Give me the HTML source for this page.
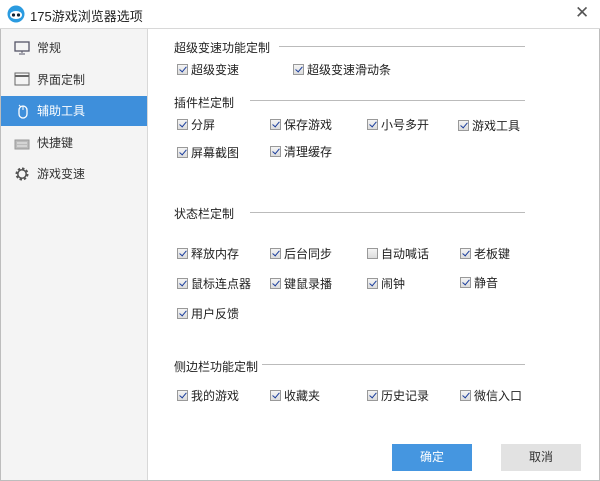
<!DOCTYPE html>
<html><head><meta charset="utf-8"><style>
*{margin:0;padding:0;box-sizing:border-box}
body{width:600px;height:481px;overflow:hidden;background:#fff;font-family:"Liberation Sans","Noto Sans CJK SC",sans-serif;font-size:12px;color:#222;position:relative}
.abs{position:absolute}
.frame{left:0;top:0;width:600px;height:481px;border:1px solid #bdbdbd}
.title{left:0;top:0;width:600px;height:29px;border-bottom:1px solid #d8d8d8;background:#fff}
.side{left:1px;top:29px;width:147px;height:451px;background:#f4f4f4;border-right:1px solid #d8d8d8}
.item{left:1px;width:146px;height:30px;line-height:30px;padding-left:36px;font-size:12px;color:#333}
.sel{background:#3e8fdb;color:#fff}
.h{font-size:12px;color:#222}
.line{height:1px;background:#bbb}
.cb{font-size:12px;color:#222;white-space:nowrap;line-height:14px}
.cb i{display:inline-block;width:11px;height:11px;border:1px solid #999;background:linear-gradient(#f4f4f4,#dcdcdc);vertical-align:-1px;margin-right:3px;position:relative}
.cb i.c:after{content:"";position:absolute;left:3px;top:0px;width:3px;height:6px;border:solid #1a3d9c;border-width:0 1.5px 1.5px 0;transform:rotate(40deg)}
.btn{width:80px;height:27px;line-height:27px;text-align:center;font-size:12px}
</style></head><body>
<div class="abs frame"></div>
<div class="abs title">
<svg class="abs" style="left:7px;top:5px" width="18" height="18" viewBox="0 0 18 18"><circle cx="9" cy="9" r="8.5" fill="#2b9be0"/><ellipse cx="9" cy="10" rx="6" ry="4" fill="#fff"/><circle cx="6.5" cy="10" r="1.6" fill="#123"/><circle cx="11.5" cy="10" r="1.6" fill="#123"/></svg>
<div class="abs" style="left:30px;top:6px;font-size:13px;color:#222">175游戏浏览器选项</div>
<div class="abs" style="left:575px;top:3px;font-size:17px;color:#555">✕</div>
</div>
<div class="abs side"></div>
<svg class="abs" style="left:14px;top:41px" width="16" height="14"><rect x="1" y="1" width="14" height="9" fill="none" stroke="#556" stroke-width="1.3"/><path d="M8 10v2M5 13h6" stroke="#556"/></svg>
<div class="abs item" style="top:33px">常规</div>
<svg class="abs" style="left:14px;top:72px" width="16" height="14"><rect x="1" y="1" width="14" height="12" fill="none" stroke="#666"/><path d="M1 4h14" stroke="#666" stroke-width="2"/></svg>
<div class="abs item" style="top:65px">界面定制</div>
<div class="abs item sel" style="top:96px">辅助工具</div>
<svg class="abs" style="left:15px;top:103px" width="14" height="16"><rect x="4" y="3" width="8" height="12" rx="4" fill="none" stroke="#fff" stroke-width="1.3"/><path d="M8 3v4M4 2l2 2" stroke="#fff"/></svg>
<svg class="abs" style="left:14px;top:136px" width="16" height="14"><rect x="1" y="4" width="14" height="9" fill="#bbb" stroke="#999"/><path d="M3 7h10M3 10h10" stroke="#eee"/></svg>
<div class="abs item" style="top:128px">快捷键</div>
<svg class="abs" style="left:14px;top:166px" width="16" height="16" viewBox="0 0 16 16"><circle cx="8" cy="8" r="5" fill="none" stroke="#555" stroke-width="3" stroke-dasharray="2.2 1.7"/><circle cx="8" cy="8" r="4.2" fill="none" stroke="#555" stroke-width="1.5"/></svg>
<div class="abs item" style="top:159px">游戏变速</div>

<div class="abs h" style="left:174px;top:39px">超级变速功能定制</div>
<div class="abs line" style="left:279px;top:46px;width:246px"></div>
<div class="abs cb" style="left:177px;top:63px"><i class="c"></i>超级变速</div>
<div class="abs cb" style="left:293px;top:63px"><i class="c"></i>超级变速滑动条</div>

<div class="abs h" style="left:174px;top:94px">插件栏定制</div>
<div class="abs line" style="left:250px;top:100px;width:275px"></div>
<div class="abs cb" style="left:177px;top:118px"><i class="c"></i>分屏</div>
<div class="abs cb" style="left:270px;top:118px"><i class="c"></i>保存游戏</div>
<div class="abs cb" style="left:367px;top:118px"><i class="c"></i>小号多开</div>
<div class="abs cb" style="left:458px;top:119px"><i class="c"></i>游戏工具</div>
<div class="abs cb" style="left:177px;top:146px"><i class="c"></i>屏幕截图</div>
<div class="abs cb" style="left:270px;top:145px"><i class="c"></i>清理缓存</div>

<div class="abs h" style="left:174px;top:205px">状态栏定制</div>
<div class="abs line" style="left:250px;top:212px;width:275px"></div>
<div class="abs cb" style="left:177px;top:247px"><i class="c"></i>释放内存</div>
<div class="abs cb" style="left:270px;top:247px"><i class="c"></i>后台同步</div>
<div class="abs cb" style="left:367px;top:247px"><i></i>自动喊话</div>
<div class="abs cb" style="left:460px;top:247px"><i class="c"></i>老板键</div>
<div class="abs cb" style="left:177px;top:277px"><i class="c"></i>鼠标连点器</div>
<div class="abs cb" style="left:270px;top:277px"><i class="c"></i>键鼠录播</div>
<div class="abs cb" style="left:367px;top:277px"><i class="c"></i>闹钟</div>
<div class="abs cb" style="left:460px;top:276px"><i class="c"></i>静音</div>
<div class="abs cb" style="left:177px;top:307px"><i class="c"></i>用户反馈</div>

<div class="abs h" style="left:174px;top:358px">侧边栏功能定制</div>
<div class="abs line" style="left:262px;top:364px;width:263px"></div>
<div class="abs cb" style="left:177px;top:389px"><i class="c"></i>我的游戏</div>
<div class="abs cb" style="left:270px;top:389px"><i class="c"></i>收藏夹</div>
<div class="abs cb" style="left:367px;top:389px"><i class="c"></i>历史记录</div>
<div class="abs cb" style="left:460px;top:389px"><i class="c"></i>微信入口</div>

<div class="abs btn" style="left:392px;top:444px;background:#4596e0;color:#fff">确定</div>
<div class="abs btn" style="left:501px;top:444px;background:#e2e2e2;color:#333">取消</div>
</body></html>
